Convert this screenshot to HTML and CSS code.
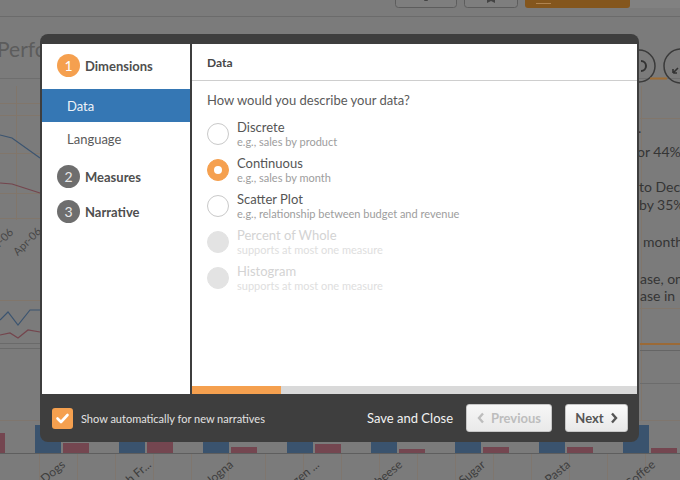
FILE: index.html
```html
<!DOCTYPE html>
<html>
<head>
<meta charset="utf-8">
<title>Narrative wizard</title>
<link rel="stylesheet" href="styles.css">
</head>
<body>
<div class="stage">
  <svg class="dashboard" width="680" height="480" viewBox="0 0 680 480">
    <rect width="680" height="480" fill="#7b7b7b"/>
    <!-- toolbar -->
    <rect x="395.5" y="-6.5" width="61" height="14" rx="3" fill="#7e7e7e" stroke="#5d5d5d"/>
    <path d="M424 1 l2 -4 l2 4 z" fill="#444"/>
    <rect x="464.5" y="-6.5" width="53" height="14" rx="3" fill="#7e7e7e" stroke="#5d5d5d"/>
    <path d="M487 -2 h8 v5 l-4 -2 l-4 2 z" fill="#444"/>
    <rect x="525" y="-6" width="105" height="14" rx="3" fill="#84561d"/>
    <path d="M536 3.5 h15" stroke="#b08450"/>
    <rect x="630" y="-6" width="52" height="14" fill="#818181"/>
    <line x1="0" y1="16.5" x2="680" y2="16.5" stroke="#6b6b6b"/>
    <!-- title -->
    <text class="dash-text" x="-3" y="57" font-size="21" fill="#5c5c5c">Perfo</text>
    <line x1="0" y1="78.5" x2="680" y2="78.5" stroke="#6e6e6e"/>
    <!-- faint grid -->
    <g stroke="#86725f" stroke-width="1" opacity="0.55">
      <line x1="0" y1="103.5" x2="40" y2="103.5"/>
      <line x1="0" y1="115.5" x2="40" y2="115.5"/>
      <line x1="0" y1="153.5" x2="40" y2="153.5"/>
      <line x1="0" y1="193.5" x2="40" y2="193.5"/>
      <line x1="0" y1="218.5" x2="40" y2="218.5"/>
      <line x1="16.5" y1="86" x2="16.5" y2="220"/>
      <line x1="0" y1="300.5" x2="40" y2="300.5"/>
      <line x1="641.5" y1="86" x2="641.5" y2="420"/>
      <line x1="640" y1="118.5" x2="680" y2="118.5"/>
      <line x1="640" y1="308.5" x2="680" y2="308.5"/>
    </g>
    <!-- left line chart -->
    <polyline points="0,135 12,138 40,158" fill="none" stroke="#3b5470" stroke-width="1.2"/>
    <polyline points="0,183 12,184 40,193" fill="none" stroke="#74454d" stroke-width="1.2"/>
    <text class="dash-text" x="14" y="233" font-size="11" fill="#474747" text-anchor="end" transform="rotate(-45 14 233)">Mar-06</text>
    <text class="dash-text" x="42" y="232" font-size="11" fill="#474747" text-anchor="end" transform="rotate(-45 42 232)">Apr-06</text>
    <polyline points="0,320 8,312 18,325 30,310 40,310" fill="none" stroke="#3b5470" stroke-width="1.2"/>
    <polyline points="0,335 10,333 18,338 28,330 40,332" fill="none" stroke="#74454d" stroke-width="1.2"/>
    <line x1="0" y1="343.5" x2="40" y2="343.5" stroke="#6a6a6a"/>
    <line x1="0" y1="348.5" x2="40" y2="348.5" stroke="#6a6a6a"/>
    <!-- right side icons and text -->
    <circle cx="639" cy="66" r="16" fill="none" stroke="#3a3a3a" stroke-width="1.5"/>
    <path d="M641 61 a5 5 0 1 1 0 10" fill="none" stroke="#333" stroke-width="2"/>
    <circle cx="681" cy="66" r="17" fill="none" stroke="#3a3a3a" stroke-width="1.5"/>
    <path d="M673 73 l5 -5 M673 73 v-4 M673 73 h4" stroke="#333" stroke-width="1.6"/>
    <line x1="650" y1="78.5" x2="667" y2="78.5" stroke="#9e6d35" stroke-width="2"/>
    <g class="dash-text" font-size="14" fill="#353535">
      <text x="638" y="133">.</text>
      <text x="637" y="157">or 44% of</text>
      <text x="639" y="192">to Dec-06</text>
      <text x="639" y="210">by 35%</text>
      <text x="643" y="247">months</text>
      <text x="640" y="284">ase, on</text>
      <text x="640" y="301">ase in</text>
    </g>
    <line x1="640" y1="344" x2="680" y2="344" stroke="#9b6a37" stroke-width="2"/>
    <line x1="640" y1="350.5" x2="680" y2="350.5" stroke="#656565"/>
    <line x1="640" y1="383.5" x2="680" y2="383.5" stroke="#6c6c6c"/>
    <!-- bar chart -->
    <g stroke="#86725f" opacity="0.45">
      <line x1="0" y1="420.5" x2="680" y2="420.5"/>
      <line x1="39.5" y1="453" x2="39.5" y2="480"/>
      <line x1="77.5" y1="453" x2="77.5" y2="480"/>
      <line x1="115.5" y1="453" x2="115.5" y2="480"/>
      <line x1="153.5" y1="453" x2="153.5" y2="480"/>
      <line x1="191.5" y1="453" x2="191.5" y2="480"/>
      <line x1="228.5" y1="453" x2="228.5" y2="480"/>
      <line x1="265.5" y1="453" x2="265.5" y2="480"/>
      <line x1="303.5" y1="453" x2="303.5" y2="480"/>
      <line x1="341.5" y1="453" x2="341.5" y2="480"/>
      <line x1="379.5" y1="453" x2="379.5" y2="480"/>
      <line x1="417.5" y1="453" x2="417.5" y2="480"/>
      <line x1="455.5" y1="453" x2="455.5" y2="480"/>
      <line x1="493.5" y1="453" x2="493.5" y2="480"/>
      <line x1="531.5" y1="453" x2="531.5" y2="480"/>
      <line x1="569.5" y1="453" x2="569.5" y2="480"/>
      <line x1="607.5" y1="453" x2="607.5" y2="480"/>
      <line x1="645.5" y1="453" x2="645.5" y2="480"/>
    </g>
    <g fill="#3a536e">
      <rect x="35" y="425" width="26" height="28"/>
      <rect x="119" y="425" width="26" height="28"/>
      <rect x="203" y="425" width="26" height="28"/>
      <rect x="287" y="425" width="26" height="28"/>
      <rect x="371" y="425" width="26" height="28"/>
      <rect x="455" y="425" width="26" height="28"/>
      <rect x="539" y="425" width="26" height="28"/>
      <rect x="623" y="425" width="26" height="28"/>
    </g>
    <g fill="#744650">
      <rect x="-21" y="433" width="26" height="20"/>
      <rect x="63" y="443" width="26" height="10"/>
      <rect x="147" y="442" width="26" height="11"/>
      <rect x="231" y="447" width="26" height="6"/>
      <rect x="315" y="444" width="26" height="9"/>
      <rect x="399" y="449" width="26" height="4"/>
      <rect x="483" y="447" width="26" height="6"/>
      <rect x="567" y="447" width="26" height="6"/>
      <rect x="651" y="448" width="26" height="5"/>
    </g>
    <line x1="0" y1="453.5" x2="680" y2="453.5" stroke="#5e5e5e"/>
    <g class="dash-text" font-size="12" fill="#3d3d3d" text-anchor="end">
      <text x="66" y="466" transform="rotate(-40 66 466)">Hot Dogs</text>
      <text x="152" y="466" transform="rotate(-40 152 466)">French Fr...</text>
      <text x="234" y="466" transform="rotate(-40 234 466)">Bologna</text>
      <text x="320" y="466" transform="rotate(-40 320 466)">Frozen ...</text>
      <text x="403" y="466" transform="rotate(-40 403 466)">Cheese</text>
      <text x="486" y="466" transform="rotate(-40 486 466)">Sugar</text>
      <text x="571" y="466" transform="rotate(-40 571 466)">Pasta</text>
      <text x="656" y="466" transform="rotate(-40 656 466)">Coffee</text>
    </g>
  </svg>

  <div class="modal">
    <div class="modal-main">
      <nav class="steps">
        <div class="step active"><span class="num">1</span><span class="label">Dimensions</span></div>
        <ul class="substeps">
          <li class="sub selected">Data</li>
          <li class="sub">Language</li>
        </ul>
        <div class="step"><span class="num">2</span><span class="label">Measures</span></div>
        <div class="step"><span class="num">3</span><span class="label">Narrative</span></div>
      </nav>
      <section class="content">
        <header class="content-head">Data</header>
        <div class="content-body">
          <p class="question">How would you describe your data?</p>
          <ul class="options">
            <li class="option">
              <span class="radio"></span>
              <span class="opt-text"><span class="opt-title">Discrete</span><span class="opt-sub">e.g., sales by product</span></span>
            </li>
            <li class="option">
              <span class="radio checked"></span>
              <span class="opt-text"><span class="opt-title">Continuous</span><span class="opt-sub">e.g., sales by month</span></span>
            </li>
            <li class="option">
              <span class="radio"></span>
              <span class="opt-text"><span class="opt-title">Scatter Plot</span><span class="opt-sub">e.g., relationship between budget and revenue</span></span>
            </li>
            <li class="option disabled">
              <span class="radio"></span>
              <span class="opt-text"><span class="opt-title">Percent of Whole</span><span class="opt-sub">supports at most one measure</span></span>
            </li>
            <li class="option disabled">
              <span class="radio"></span>
              <span class="opt-text"><span class="opt-title">Histogram</span><span class="opt-sub">supports at most one measure</span></span>
            </li>
          </ul>
        </div>
        <div class="progress"><div class="progress-fill" style="width:20%"></div></div>
      </section>
    </div>
    <footer class="modal-foot">
      <span class="checkbox"><svg width="21" height="21" viewBox="0 0 21 21"><polyline points="5.5,10.5 9,14 15.5,7" fill="none" stroke="#fff" stroke-width="2.6" stroke-linecap="round" stroke-linejoin="round"/></svg></span>
      <span class="check-label">Show automatically for new narratives</span>
      <span class="save">Save and Close</span>
      <button class="btn prev" disabled><svg width="8" height="12" viewBox="0 0 8 12"><polyline points="6,1.5 2,6 6,10.5" fill="none" stroke="currentColor" stroke-width="2.4"/></svg>Previous</button>
      <button class="btn next">Next<svg width="8" height="12" viewBox="0 0 8 12"><polyline points="2,1.5 6,6 2,10.5" fill="none" stroke="currentColor" stroke-width="2.4"/></svg></button>
    </footer>
  </div>
</div>
</body>
</html>
```
FILE: styles.css
```css
* { box-sizing: border-box; margin: 0; padding: 0; }

body {
  margin: 0;
  background: #7b7b7b;
  font-family: Lato, "Open Sans", sans-serif;
}

.stage {
  position: relative;
  width: 680px;
  height: 480px;
  overflow: hidden;
}

.dashboard { display: block; }
.dash-text { font-family: Lato, sans-serif; }

.modal {
  position: absolute;
  left: 40px;
  top: 34px;
  width: 599px;
  height: 408px;
  background: #3e3e3e;
  border-radius: 8px;
  padding: 10px 2px 0;
  display: flex;
  flex-direction: column;
}

.modal-main {
  display: flex;
  gap: 2px;
  height: 350px;
}

/* left steps */
.steps {
  width: 148px;
  background: #fff;
  padding-top: 4px;
}

.step {
  height: 35px;
  display: flex;
  align-items: center;
  padding-left: 15px;
  gap: 5px;
}

.num {
  width: 23px;
  height: 23px;
  border-radius: 50%;
  background: #6e6e6e;
  color: #e8e8e8;
  font-size: 14px;
  display: flex;
  align-items: center;
  justify-content: center;
}

.step.active .num { background: #f5a04f; color: #fff; }

.label {
  font-weight: 700;
  font-size: 13px;
  color: #4f4f4f;
}

.substeps {
  list-style: none;
  margin: 6px 0 4px;
}

.sub {
  height: 33px;
  display: flex;
  align-items: center;
  padding-left: 25px;
  font-size: 13px;
  color: #5a5a5a;
}

.sub.selected {
  background: #3577b4;
  color: #eef3f8;
}

/* right content */
.content {
  flex: 1;
  background: #fff;
  display: flex;
  flex-direction: column;
}

.content-head {
  height: 37px;
  border-bottom: 1px solid #cecece;
  padding-left: 15px;
  display: flex;
  align-items: center;
  font-weight: 700;
  font-size: 12px;
  color: #474747;
}

.content-body {
  flex: 1;
  padding: 11px 15px 0;
}

.question {
  font-size: 13px;
  line-height: 16px;
  color: #5a5a5a;
}

.options {
  list-style: none;
  margin-top: 8px;
}

.option {
  height: 36px;
  display: flex;
  align-items: center;
  gap: 8px;
}

.radio {
  width: 22px;
  height: 22px;
  border-radius: 50%;
  border: 1px solid #c9c9c9;
  background: #fff;
  display: flex;
  align-items: center;
  justify-content: center;
  flex: none;
}

.radio.checked {
  background: #f5a04f;
  border-color: #f5a04f;
}

.radio.checked::after {
  content: "";
  width: 8px;
  height: 8px;
  border-radius: 50%;
  background: #fff;
}

.opt-text {
  display: flex;
  flex-direction: column;
}

.opt-title {
  font-size: 13px;
  line-height: 15px;
  color: #555;
}

.opt-sub {
  font-size: 11px;
  line-height: 14px;
  color: #9d9d9d;
}

.option.disabled .radio {
  background: #e3e3e3;
  border-color: #e3e3e3;
}

.option.disabled .opt-title { color: #d3d3d3; }
.option.disabled .opt-sub { color: #dedede; }

.progress {
  height: 8px;
  background: #d9d9d9;
}

.progress-fill {
  height: 100%;
  background: #f5a04f;
}

/* footer */
.modal-foot {
  height: 48px;
  display: flex;
  align-items: center;
  padding: 0 9px 0 10px;
}

.checkbox {
  width: 21px;
  height: 21px;
  border-radius: 3px;
  background: #f5a04f;
  display: flex;
}

.check-label {
  margin-left: 8px;
  font-size: 11px;
  color: #e2e2e2;
}

.save {
  margin-left: auto;
  font-size: 13px;
  color: #f2f2f2;
}

.btn {
  margin-left: 13px;
  height: 28px;
  border: 1px solid #c6c6c6;
  border-radius: 3px;
  background: linear-gradient(#fbfbfb, #e8e8e8);
  font-family: Lato, "Open Sans", sans-serif;
  font-weight: 700;
  font-size: 13px;
  display: flex;
  align-items: center;
  justify-content: center;
  gap: 6px;
}

.btn.prev {
  width: 86px;
  color: #bdbdbd;
  background: linear-gradient(#f6f6f6, #e9e9e9);
}

.btn.next {
  width: 63px;
  color: #555;
}
```
